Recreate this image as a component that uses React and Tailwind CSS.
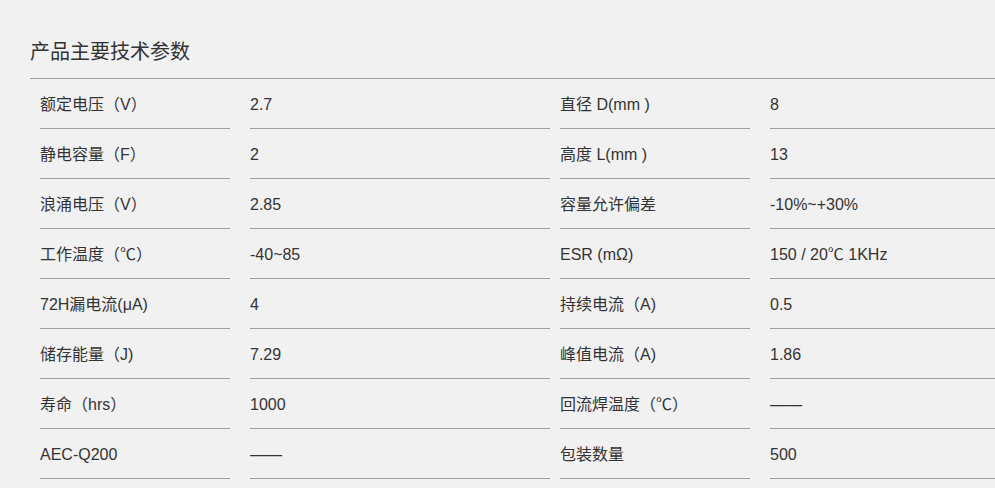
import React from "react";

const rows = [
  ["额定电压（V）", "2.7", "直径 D(mm )", "8"],
  ["静电容量（F）", "2", "高度 L(mm )", "13"],
  ["浪涌电压（V）", "2.85", "容量允许偏差", "-10%~+30%"],
  ["工作温度（℃）", "-40~85", "ESR (mΩ)", "150 / 20℃ 1KHz"],
  ["72H漏电流(μA)", "4", "持续电流（A)", "0.5"],
  ["储存能量（J)", "7.29", "峰值电流（A)", "1.86"],
  ["寿命（hrs）", "1000", "回流焊温度（℃）", "——"],
  ["AEC-Q200", "——", "包装数量", "500"],
];

function Cell({ children, w, ml }) {
  return (
    <div className={`${w} ${ml} h-[50px] border-b border-[#a0a0a0] pt-[14px] leading-[23px] whitespace-nowrap`}>
      {children}
    </div>
  );
}

export default function App() {
  return (
    <div
      className="w-full min-h-[488px] overflow-hidden bg-[#f1f1f1] text-[#333333]"
      style={{ fontFamily: '"Liberation Sans", "Noto Sans CJK SC", sans-serif' }}
    >
      <div className="ml-[30px] w-[1040px]">
        <div className="h-[79px] pt-[38px] text-[20px] leading-[28px] border-b border-[#a0a0a0]">
          产品主要技术参数
        </div>
        <div className="text-[16px]">
          {rows.map((r, i) => (
            <div key={i} className="flex">
              <div className="flex w-[520px] pl-[10px]">
                <Cell w="w-[190px]" ml="">{r[0]}</Cell>
                <Cell w="w-[300px]" ml="ml-[20px]">{r[1]}</Cell>
              </div>
              <div className="flex w-[520px] pl-[10px]">
                <Cell w="w-[190px]" ml="">{r[2]}</Cell>
                <Cell w="w-[300px]" ml="ml-[20px]">{r[3]}</Cell>
              </div>
            </div>
          ))}
        </div>
      </div>
    </div>
  );
}
